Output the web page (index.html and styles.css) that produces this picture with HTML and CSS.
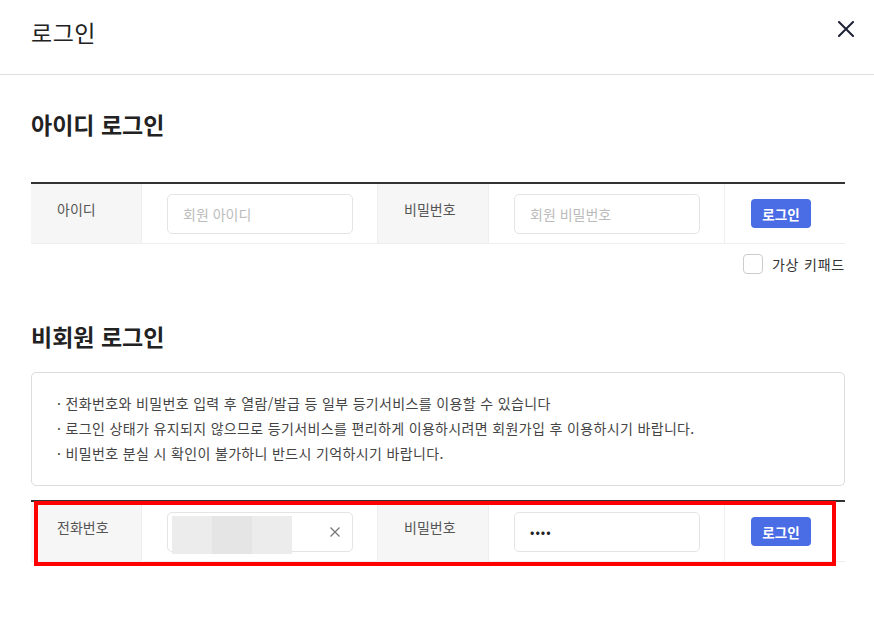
FILE: index.html
```html
<!DOCTYPE html>
<html lang="ko">
<head>
<meta charset="utf-8">
<link rel="stylesheet" href="styles.css">
</head>
<body>
<div class="modal">
  <header class="modal-header">
    <h1 class="modal-title">로그인</h1>
    <button class="close-btn" aria-label="닫기">
      <svg width="16" height="16" viewBox="0 0 16 16"><path d="M1 1 L15 15 M15 1 L1 15" stroke="#1e2235" stroke-width="2" stroke-linecap="square" fill="none"/></svg>
    </button>
  </header>
  <main class="modal-body">
    <h2 class="section-title first">아이디 로그인</h2>
    <div class="login-row">
      <div class="cell label">아이디</div>
      <div class="cell field"><div class="input placeholder">회원 아이디</div></div>
      <div class="cell label">비밀번호</div>
      <div class="cell field"><div class="input placeholder">회원 비밀번호</div></div>
      <div class="cell action"><button class="btn-login">로그인</button></div>
    </div>
    <label class="keypad">
      <span class="checkbox"></span>
      <span class="keypad-text">가상 키패드</span>
    </label>

    <h2 class="section-title second">비회원 로그인</h2>
    <div class="notice">
      <p>· 전화번호와 비밀번호 입력 후 열람/발급 등 일부 등기서비스를 이용할 수 있습니다</p>
      <p>· 로그인 상태가 유지되지 않으므로 등기서비스를 편리하게 이용하시려면 회원가입 후 이용하시기 바랍니다.</p>
      <p>· 비밀번호 분실 시 확인이 불가하니 반드시 기억하시기 바랍니다.</p>
    </div>
    <div class="login-row guest">
      <div class="cell label">전화번호</div>
      <div class="cell field">
        <div class="input phone">
          <span class="mask"><i class="m1"></i><i class="m2"></i><i class="m3"></i></span>
          <svg class="clear" width="10" height="10" viewBox="0 0 10 10"><path d="M0.5 0.5 L9.5 9.5 M9.5 0.5 L0.5 9.5" stroke="#777" stroke-width="1.3" fill="none"/></svg>
        </div>
      </div>
      <div class="cell label">비밀번호</div>
      <div class="cell field"><div class="input pw">••••</div></div>
      <div class="cell action"><button class="btn-login">로그인</button></div>
      <div class="highlight"></div>
    </div>
  </main>
</div>
</body>
</html>
```

FILE: styles.css
```css
* { box-sizing: border-box; }
html, body { margin: 0; padding: 0; background: #fff; }
body {
  font-family: "Noto Sans CJK KR", "Noto Sans", sans-serif;
  color: #222;
  width: 874px;
  height: 625px;
  overflow: hidden;
}
.modal-header {
  height: 75px;
  border-bottom: 1px solid #dedede;
  display: flex;
  align-items: flex-start;
  justify-content: space-between;
  padding: 0 20px 0 31px;
}
.modal-title {
  margin: 16px 0 0;
  font-size: 23px;
  font-weight: 400;
  line-height: 32px;
  color: #222;
  letter-spacing: 0.5px;
}
.close-btn {
  margin-top: 21px;
  padding: 0;
  border: 0;
  background: none;
  width: 16px;
  height: 16px;
  display: block;
  cursor: pointer;
}
.close-btn svg { display: block; }
.modal-body {
  padding: 0 29px 0 31px;
}
.section-title {
  margin: 0;
  font-size: 23px;
  font-weight: 700;
  line-height: 32px;
  color: #222;
  letter-spacing: 0;
}
.section-title.first { margin-top: 33px; margin-bottom: 42px; }
.section-title.second { margin-top: 46px; margin-bottom: 20px; }
.login-row {
  position: relative;
  display: grid;
  grid-template-columns: 110px 237px 110px 237px 120px;
  height: 62px;
  border-top: 2px solid #333;
  border-bottom: 1px solid #eee;
}
.cell { height: 100%; }
.cell.label {
  background: #f6f6f6;
  font-size: 14px;
  color: #555;
  padding: 15px 0 0 26px;
  line-height: 20px;
}
.cell.field, .cell.action { border-left: 1px solid #eee; border-right: 1px solid #eee; }
.cell.field { padding: 10px 0 0 25px; }
.cell.action { border-right: 0; border-left: 0; padding: 15px 0 0 26px; }
.input {
  width: 186px;
  height: 40px;
  border: 1px solid #e4e4e4;
  border-radius: 5px;
  background: #fff;
  font-size: 14px;
  line-height: 38px;
  padding-left: 15px;
}
.placeholder { color: #bbb; }
.input.pw { color: #222; font-size: 13px; letter-spacing: 1px; }
.input.phone {
  position: relative;
  padding-left: 4px;
  display: flex;
  align-items: center;
  justify-content: space-between;
  padding-right: 12px;
}
.mask {
  display: flex;
  height: 38px;
  margin-top: 3px;
  align-self: flex-start;
}
.mask i { display: block; width: 40px; height: 100%; }
.mask .m1 { background: #ececec; }
.mask .m2 { background: #e5e5e5; }
.mask .m3 { background: #ececec; }
.clear { display: block; }
.btn-login {
  width: 60px;
  height: 29px;
  border: 0;
  border-radius: 4px;
  background: #4a6de5;
  color: #fff;
  font-family: inherit;
  font-size: 13.5px;
  font-weight: 700;
  padding: 0;
  cursor: pointer;
}
.keypad {
  display: flex;
  justify-content: flex-end;
  align-items: center;
  gap: 9px;
  margin-top: 10px;
  height: 20px;
}
.checkbox {
  width: 20px;
  height: 20px;
  border: 1px solid #ccc;
  border-radius: 4px;
  background: #fff;
}
.keypad-text { font-size: 14px; color: #333; letter-spacing: 0.8px; }
.notice {
  border: 1px solid #dcdcdc;
  border-radius: 5px;
  height: 114px;
  padding: 18px 0 0 25px;
  margin-bottom: 14px;
}
.notice p {
  margin: 0;
  font-size: 14px;
  line-height: 25px;
  color: #444;
  letter-spacing: 0.35px;
}
.highlight {
  position: absolute;
  left: 3px;
  top: -1px;
  width: 802px;
  height: 65px;
  border: 4px solid #f00;
  pointer-events: none;
}
```
